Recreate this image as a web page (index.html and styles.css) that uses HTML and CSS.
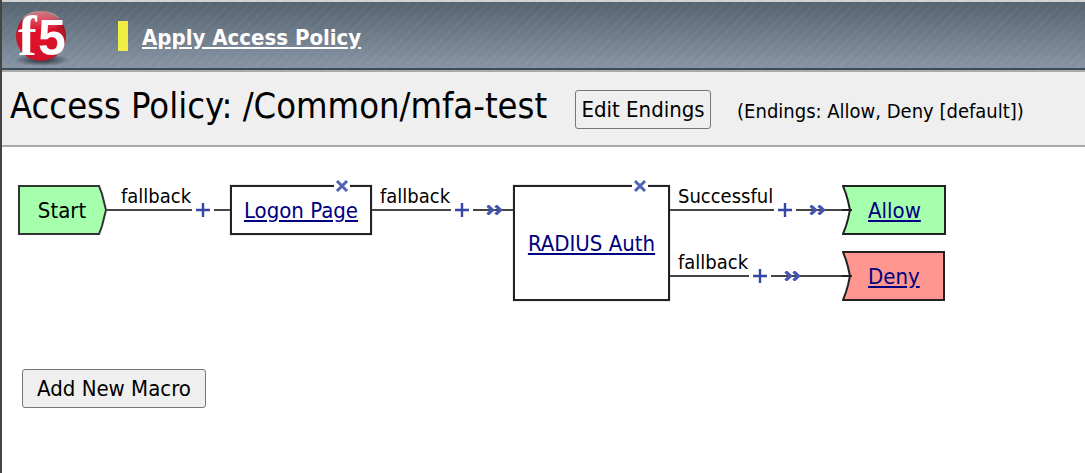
FILE: index.html
```
<!DOCTYPE html>
<html lang="en">
<head>
<meta charset="utf-8">
<title>Access Policy</title>
<link rel="stylesheet" href="styles.css">
</head>
<body>
<svg class="defs" width="0" height="0" aria-hidden="true">
  <symbol id="plus" viewBox="0 0 14 14"><path d="M7 0v14M0 7h14" stroke="#3446a8" stroke-width="2.4"/></symbol>
  <symbol id="cross" viewBox="0 0 14 12"><path d="M2 1l10 10M12 1L2 11" stroke="#5262b4" stroke-width="3"/></symbol>
  <symbol id="chevrons" viewBox="0 0 17 10"><path d="M1.500 .5l5 4.500-5 4.500M9.500 .5l5 4.500-5 4.500" fill="none" stroke="#4455b2" stroke-width="3.200"/></symbol>
  <symbol id="notch" viewBox="0 0 10 50"><path d="M10 1H1l3 8 2 7 2 9-2 9-2 7-3 8h9z"/><path d="M10 1H1l3 8 2 7 2 9-2 9-2 7-3 8h9M0 25h10" fill="none" stroke="#222" stroke-width="2"/></symbol>
</svg>
<header class="topbar">
  <svg class="logo" viewBox="0 0 60 60" role="img" aria-label="f5">
    <defs>
      <radialGradient id="ball" cx=".45" cy=".55" r=".6"><stop offset="0" stop-color="#e5102a"/><stop offset=".7" stop-color="#d01328"/><stop offset="1" stop-color="#8e1a27"/></radialGradient>
      <linearGradient id="shine" x2="0" y2="1"><stop offset="0" stop-color="#fff" stop-opacity=".45"/><stop offset="1" stop-color="#fff" stop-opacity="0"/></linearGradient>
      <radialGradient id="shade"><stop offset="0" stop-color="#222b35"/><stop offset="1" stop-color="#222b35" stop-opacity="0"/></radialGradient>
    </defs>
    <ellipse cx="31" cy="54" rx="28" ry="6" fill="url(#shade)"/>
    <circle cx="30" cy="30" r="25" fill="url(#ball)"/>
    <ellipse cx="30" cy="15" rx="19" ry="10" fill="url(#shine)"/>
    <text x="7" y="49" class="logo-f">f</text>
    <text x="27" y="49" class="logo-5">5</text>
  </svg>
  <span class="marker"></span>
  <a class="apply" href="#">Apply Access Policy</a>
</header>
<section class="titlebar">
  <h1>Access Policy: /Common/mfa-test</h1>
  <button class="btn edit" type="button">Edit Endings</button>
  <span class="endings">(Endings: Allow, Deny [default])</span>
</section>
<main>
  <div class="flow">
    <div class="start"><span>Start</span><svg width="10" height="50" viewBox="0 0 10 50"><path d="M0 1h2l3 8 2 8 2 8-2 8-2 8-3 8H0z" fill="#a5ffad"/><path d="M0 1h2l3 8 2 8 2 8-2 8-2 8-3 8H0" fill="none" stroke="#333" stroke-width="2"/></svg></div>
    <div class="link first"><span class="wire">fallback</span><button class="add" type="button" aria-label="Insert"><svg><use href="#plus"/></svg></button><span class="tail"></span></div>
    <div class="node"><button class="remove" type="button" aria-label="Remove"><svg><use href="#cross"/></svg></button><a href="#">Logon Page</a></div>
    <div class="link swap"><span class="wire">fallback</span><button class="add" type="button" aria-label="Insert"><svg><use href="#plus"/></svg></button><span class="tail"><svg><use href="#chevrons"/></svg></span></div>
    <div class="node tall"><button class="remove" type="button" aria-label="Remove"><svg><use href="#cross"/></svg></button><a href="#">RADIUS Auth</a></div>
    <div class="branches">
      <div class="link swap"><span class="wire">Successful</span><button class="add" type="button" aria-label="Insert"><svg><use href="#plus"/></svg></button><span class="tail"><svg><use href="#chevrons"/></svg></span></div>
      <div class="ending allow"><svg><use href="#notch"/></svg><a href="#">Allow</a></div>
      <div class="link swap"><span class="wire">fallback</span><button class="add" type="button" aria-label="Insert"><svg><use href="#plus"/></svg></button><span class="tail"><svg><use href="#chevrons"/></svg></span></div>
      <div class="ending deny"><svg><use href="#notch"/></svg><a href="#">Deny</a></div>
    </div>
  </div>
  <button class="btn macro" type="button">Add New Macro</button>
</main>
</body>
</html>
```
FILE: styles.css
```
* { box-sizing: border-box; }
body {
  margin: 0;
  min-height: 100vh;
  border-left: 2px solid #444;
  background: #fff;
  color: #000;
  font: 20px/24px Tahoma, "DejaVu Sans Condensed", "Noto Sans", sans-serif;
}
.defs { position: absolute; }
button { font: inherit; color: inherit; }
.topbar {
  display: flex;
  align-items: center;
  height: 72px;
  border-top: 2px solid #d3d3d3;
  border-bottom: 2px solid #aaa;
  box-shadow: inset 0 -2px #3e4c59;
  background:
    repeating-linear-gradient(135deg, rgba(255,255,255,.02) 0 3px, rgba(0,0,0,.01) 3px 7px),
    linear-gradient(#566470, #8a97a7);
}
.logo { width: 60px; height: 60px; margin-left: 9px; }
.logo-f, .logo-5 { fill: #fff; font-weight: bold; }
.logo-f { font-family: "Liberation Serif", serif; font-size: 56px; }
.logo-5 { font-family: "Liberation Sans", sans-serif; font-size: 50px; }
.marker { width: 10px; height: 30px; margin: 0 14px 0 47px; background: #eeee44; }
.apply { padding-top: 4px; color: #fff; font-size: 22px; font-weight: bold; white-space: nowrap; }
.titlebar {
  display: flex;
  align-items: center;
  height: 75px;
  padding-left: 8px;
  border-bottom: 2px solid #aaa;
  background: #efefef;
}
h1 { margin: 0 28px 6px 0; font-size: 36px; line-height: 40px; font-weight: normal; white-space: nowrap; }
.btn {
  height: 39px;
  padding: 0;
  border: 1px solid #767676;
  border-radius: 3px;
  background: #efefef;
  font-size: 22px;
  white-space: nowrap;
}
.edit { width: 136px; margin-top: 2px; }
.endings { margin: 4px 0 0 26px; white-space: nowrap; }
main { padding: 38px 16px; }
.flow { display: flex; align-items: flex-start; font-size: 22px; white-space: nowrap; }
.flow a { color: #000080; }
.start { display: flex; width: 89px; height: 50px; }
.start span {
  flex: 1;
  border: 2px solid #333;
  border-right: 0;
  background: #a5ffad;
  padding-left: 7px;
  line-height: 48px;
  text-align: center;
}
.link { display: flex; align-items: flex-start; height: 50px; font-size: 20px; }
.wire { height: 26px; padding: 0 1px 2px 8px; border-bottom: 2px solid #444; line-height: 22px; }
.first .wire { padding-left: 14px; }
.add { display: flex; margin: 18px 4px 0; padding: 0; border: 0; background: none; }
.add svg { width: 14px; height: 14px; }
.tail { display: flex; flex: 1; align-items: center; min-width: 16px; height: 10px; margin-top: 20px; padding-left: 13px; background: linear-gradient(#444, #444) 0 4px / 100% 2px no-repeat; }
.tail svg { width: 17px; height: 10px; }
.flow > .swap { width: 141px; }
.first { width: 123px; }
.node {
  position: relative;
  display: flex;
  align-items: center;
  justify-content: center;
  width: 142px;
  height: 50px;
  padding-top: 2px;
  border: 2px solid #222;
  background: #fff;
  box-shadow: 0 0 1px #888;
}
.node.tall { width: 157px; height: 116px; }
.remove { position: absolute; top: -7px; right: 20px; display: flex; padding: 0 1px; border: 0; background: #fff; }
.remove svg { width: 14px; height: 12px; }
.branches { display: grid; grid-template-columns: 172px auto; row-gap: 16px; justify-items: start; }
.branches .link { width: 100%; }
.ending { display: flex; height: 50px; }
.ending svg { width: 10px; height: 50px; }
.ending a { padding: 0 23px 0 16px; border: 2px solid #222; border-left: 0; line-height: 48px; }
.allow { fill: #a5ffad; }
.allow a { background: #a5ffad; }
.deny { fill: #ff968f; }
.deny a { background: #ff968f; }
.first .tail { min-width: 0; }
.macro { width: 184px; margin: 68px 0 0 4px; }
```
